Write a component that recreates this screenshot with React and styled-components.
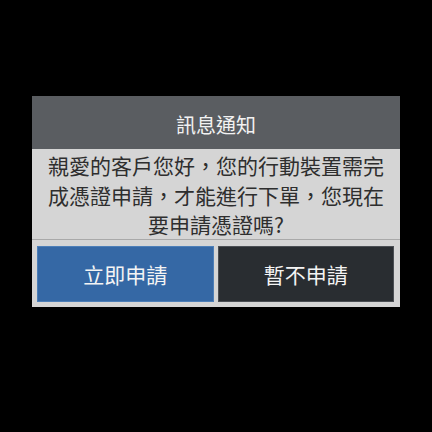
import styled, { createGlobalStyle } from "styled-components";

const GlobalStyle = createGlobalStyle`
  html, body {
    margin: 0;
    padding: 0;
    background: #000;
  }
  body {
    font-family: "Noto Sans CJK TC", "Noto Sans", sans-serif;
  }
`;

function App() {
  const accept = () => {
    // To be added
  };
  const later = () => {
    // To be added
  };

  return (
    <>
      <GlobalStyle />
      <Screen>
        <Dialog>
          <Title>訊息通知</Title>
          <Message>
            親愛的客戶您好，您的行動裝置需完
            <br />
            成憑證申請，才能進行下單，您現在
            <br />
            要申請憑證嗎?
          </Message>
          <Actions>
            <ActionButton variant="primary" onClick={accept}>
              立即申請
            </ActionButton>
            <ActionButton onClick={later}>暫不申請</ActionButton>
          </Actions>
        </Dialog>
      </Screen>
    </>
  );
}

const Screen = styled.div`
  width: 432px;
  height: 432px;
  background: #000;
  padding-top: 96px;
  box-sizing: border-box;
`;

const Dialog = styled.div`
  width: 368px;
  margin-left: 32px;
  background: #d5d5d5;
  display: flex;
  flex-direction: column;
`;

const Title = styled.div`
  height: 53px;
  background: #5a5d61;
  color: #f2f2f2;
  font-size: 20px;
  display: flex;
  align-items: center;
  justify-content: center;
  padding-top: 3px;
  box-sizing: border-box;
`;

const Message = styled.div`
  height: 91px;
  padding-top: 2px;
  box-sizing: border-box;
  font-size: 21px;
  line-height: 29.5px;
  color: #2e2e2e;
  text-align: center;
  border-bottom: 1px solid #a9a9a9;
`;

const Actions = styled.div`
  display: flex;
  gap: 4px;
  padding: 6px 6px 5px 5px;
`;

const ActionButton = styled.button`
  flex: 1;
  height: 56px;
  box-sizing: border-box;
  border: 1px solid ${(props) => (props.variant === "primary" ? "#4d7fb8" : "#4b4f54")};
  background: ${(props) => (props.variant === "primary" ? "#3568a5" : "#292d31")};
  color: #f4f4f4;
  font-family: inherit;
  font-size: 21px;
  padding: 0;
  cursor: pointer;
`;

export default App;
